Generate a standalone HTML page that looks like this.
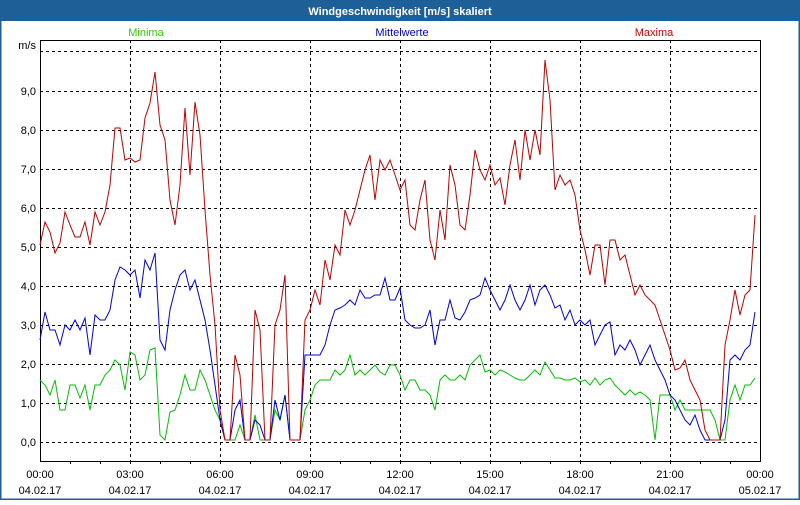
<!DOCTYPE html>
<html><head><meta charset="utf-8"><style>
html,body{margin:0;padding:0;background:#fff;}
body{width:800px;height:500px;overflow:hidden;font-family:"Liberation Sans","DejaVu Sans",sans-serif;}
</style></head><body>
<svg width="800" height="500" xmlns="http://www.w3.org/2000/svg" font-family="Liberation Sans, DejaVu Sans, sans-serif" font-size="11">
<rect x="0" y="0" width="800" height="500" fill="#fff"/>
<rect x="0" y="0" width="800" height="21" fill="#1f5f97"/>
<rect x="0.5" y="0.5" width="799" height="499" fill="none" stroke="#1f5f97" stroke-width="2"/>
<text x="400" y="15" text-anchor="middle" fill="#fff" font-weight="bold">Windgeschwindigkeit [m/s] skaliert</text>
<text x="146" y="36" text-anchor="middle" fill="#33cc00">Minima</text>
<text x="402" y="36" text-anchor="middle" fill="#0000cc">Mittelwerte</text>
<text x="654" y="36" text-anchor="middle" fill="#cc0000">Maxima</text>
<text x="36" y="49" text-anchor="end">m/s</text>
<g text-anchor="end">
<text x="36" y="95">9,0</text><text x="36" y="134">8,0</text><text x="36" y="173">7,0</text><text x="36" y="212">6,0</text><text x="36" y="251">5,0</text><text x="36" y="290">4,0</text><text x="36" y="329">3,0</text><text x="36" y="368">2,0</text><text x="36" y="407">1,0</text><text x="36" y="446">0,0</text>
</g>
<g stroke="#000" stroke-dasharray="3,3" stroke-width="1">
<path d="M40 51.5H760M40 91.5H760M40 130.5H760M40 169.5H760M40 208.5H760M40 247.5H760M40 286.5H760M40 325.5H760M40 364.5H760M40 403.5H760M40 442.5H760"/>
<path d="M130.5 40V461M220.5 40V461M310.5 40V461M400.5 40V461M490.5 40V461M580.5 40V461M670.5 40V461"/>
</g>
<g stroke="#000" fill="none">
<path d="M40.5 40V461.5H760.5V40M40 40.5H761"/>
<path d="M70.5 461V464M100.5 461V464M130.5 461V464M160.5 461V464M190.5 461V464M220.5 461V464M250.5 461V464M280.5 461V464M310.5 461V464M340.5 461V464M370.5 461V464M400.5 461V464M430.5 461V464M460.5 461V464M490.5 461V464M520.5 461V464M550.5 461V464M580.5 461V464M610.5 461V464M640.5 461V464M670.5 461V464M700.5 461V464M730.5 461V464"/>
</g>
<g text-anchor="middle">
<text x="40" y="478">00:00</text><text x="40" y="494">04.02.17</text>
<text x="130" y="478">03:00</text><text x="130" y="494">04.02.17</text>
<text x="220" y="478">06:00</text><text x="220" y="494">04.02.17</text>
<text x="310" y="478">09:00</text><text x="310" y="494">04.02.17</text>
<text x="400" y="478">12:00</text><text x="400" y="494">04.02.17</text>
<text x="490" y="478">15:00</text><text x="490" y="494">04.02.17</text>
<text x="580" y="478">18:00</text><text x="580" y="494">04.02.17</text>
<text x="670" y="478">21:00</text><text x="670" y="494">04.02.17</text>
<text x="760" y="478">00:00</text><text x="760" y="494">05.02.17</text>
</g>
<g fill="none" stroke-width="1">
<polyline stroke="#00c000" points="40,380 45,385 50,395 55,380 60,410 65,410 70,385 75,385 80,398 85,385 90,410 95,385 100,385 105,375 110,370 115,360 120,365 125,390 130,352 135,355 140,380 145,375 150,350 155,348 160,435 165,440 170,412 175,410 180,395 185,375 190,390 195,390 200,370 205,380 210,395 215,410 220,420 225,440 230,440 235,440 240,425 245,440 250,440 255,415 260,440 265,440 270,440 275,410 280,420 285,395 290,440 295,440 300,440 305,410 310,400 315,385 320,380 325,380 330,380 335,370 340,375 345,370 350,355 355,375 360,370 365,375 370,370 375,365 380,372 385,375 390,365 395,365 400,375 405,390 410,380 415,380 420,390 425,390 430,395 435,410 440,380 445,375 450,380 455,380 460,375 465,380 470,365 475,360 480,355 485,372 490,370 495,375 500,370 505,372 510,375 515,378 520,380 525,380 530,375 535,370 540,375 545,362 550,370 555,378 560,378 565,380 570,380 575,378 580,382 585,380 590,385 595,378 600,385 605,380 610,378 615,385 620,390 625,395 630,390 635,395 640,392 645,395 650,400 655,440 660,395 665,395 670,395 675,410 680,400 685,410 690,410 695,410 700,410 705,410 710,410 715,420 720,440 725,440 730,400 735,385 740,400 745,385 750,385 755,378"/>
<polyline stroke="#0000e0" points="40,340 45,312 50,330 55,330 60,345 65,325 70,330 75,320 80,330 85,318 90,355 95,315 100,320 105,320 110,310 115,280 120,267 125,270 130,275 135,270 140,298 145,260 150,270 155,253 160,340 165,350 170,310 175,290 180,275 185,270 190,290 195,280 200,300 205,320 210,350 215,385 220,420 225,440 230,440 235,410 240,400 245,440 250,440 255,420 260,425 265,440 270,440 275,400 280,420 285,395 290,440 295,440 300,440 305,355 310,355 315,355 320,355 325,345 330,325 335,310 340,308 345,305 350,300 355,305 360,290 365,298 370,298 375,295 380,295 385,278 390,300 395,300 400,288 405,320 410,325 415,328 420,328 425,325 430,310 435,345 440,320 445,320 450,300 455,318 460,320 465,312 470,300 475,298 480,295 485,278 490,290 495,300 500,310 505,300 510,285 515,300 520,310 525,300 530,285 535,305 540,290 545,285 550,295 555,308 560,305 565,320 570,310 575,325 580,320 585,325 590,320 595,345 600,335 605,325 610,322 615,355 620,345 625,350 630,340 635,350 640,365 645,355 650,345 655,360 660,370 665,380 670,395 675,400 680,410 685,420 690,425 695,415 700,430 705,440 710,440 715,440 720,440 725,420 730,360 735,355 740,360 745,350 750,345 755,312"/>
<polyline stroke="#c00000" points="40,245 45,222 50,232 55,253 60,243 65,212 70,225 75,237 80,237 85,222 90,245 95,212 100,225 105,212 110,185 115,128 120,128 125,160 130,158 135,162 140,160 145,118 150,103 155,72 160,125 165,140 170,200 175,225 180,185 185,108 190,175 195,102 200,135 205,210 210,275 215,325 220,410 225,440 230,440 235,355 240,375 245,440 250,440 255,310 260,330 265,440 270,440 275,325 280,310 285,275 290,440 295,440 300,440 305,320 310,310 315,290 320,305 325,260 330,280 335,245 340,255 345,210 350,225 355,210 360,190 365,170 370,155 375,200 380,160 385,170 390,160 395,175 400,190 405,180 410,225 415,230 420,200 425,180 430,240 435,260 440,210 445,240 450,165 455,185 460,225 465,230 470,195 475,150 480,170 485,180 490,165 495,185 500,178 505,205 510,165 515,140 520,180 525,130 530,160 535,130 540,155 545,60 550,100 555,190 560,175 565,185 570,180 575,195 580,230 585,250 590,275 595,245 600,245 605,285 610,240 615,240 620,260 625,255 630,275 635,295 640,285 645,295 650,300 655,305 660,320 665,335 670,350 675,370 680,368 685,360 690,380 695,390 700,400 705,430 710,440 715,440 720,440 725,345 730,320 735,290 740,315 745,295 750,290 755,215"/>
</g>
</svg>
</body></html>
